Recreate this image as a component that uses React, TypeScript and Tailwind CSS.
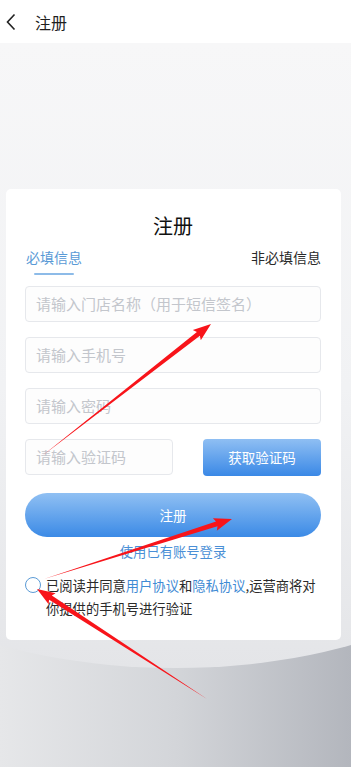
import React from "react";

type Pt = [number, number];

function arrowPoints(tail: Pt, tip: Pt, head = 16, headW = 13, bodyW = 5): string {
  const [x1, y1] = tail;
  const [x2, y2] = tip;
  const dx = x2 - x1;
  const dy = y2 - y1;
  const len = Math.hypot(dx, dy);
  const ux = dx / len;
  const uy = dy / len;
  const nx = -uy;
  const ny = ux;
  const bx = x2 - ux * head;
  const by = y2 - uy * head;
  const pts: Pt[] = [
    [x1, y1],
    [bx + (nx * bodyW) / 2, by + (ny * bodyW) / 2],
    [bx - ux * 2 + (nx * headW) / 2, by - uy * 2 + (ny * headW) / 2],
    [x2, y2],
    [bx - ux * 2 - (nx * headW) / 2, by - uy * 2 - (ny * headW) / 2],
    [bx - (nx * bodyW) / 2, by - (ny * bodyW) / 2],
  ];
  return pts.map((p) => `${p[0].toFixed(1)},${p[1].toFixed(1)}`).join(" ");
}

function Field({ placeholder, className = "" }: { placeholder: string; className?: string }) {
  return (
    <div
      className={`h-9 rounded-[4px] border border-[#e6e8ec] bg-[#fdfdfd] flex items-center pl-[10px] text-[15px] text-[#c3c6cc] ${className}`}
    >
      {placeholder}
    </div>
  );
}

export default function App() {
  return (
    <div
      className="relative w-[351px] h-[767px] overflow-hidden flex flex-col bg-[linear-gradient(90deg,#e6e7e9_0%,#d3d5d9_50%,#b3b6bd_100%)]"
      style={{ fontFamily: '"Noto Sans CJK SC", "Noto Sans", sans-serif' }}
    >
      {/* header */}
      <div className="h-[43px] shrink-0 bg-white flex items-center">
        <svg width="14" height="20" viewBox="0 0 14 20" className="ml-[4px]">
          <polyline points="10.5,2.5 3.5,10 10.5,17.5" fill="none" stroke="#222" strokeWidth="1.6" />
        </svg>
        <span className="ml-[17px] text-[16px] text-[#1f1f1f] leading-none">注册</span>
      </div>

      {/* hero with curved bottom */}
      <div className="shrink-0 h-[625px] mx-[-175px] px-[175px] rounded-b-[350px_172px] bg-[linear-gradient(180deg,#f7f7f8_0%,#f1f2f4_55%,#e4e5e8_100%)] pt-[146px]">
        <div className="ml-[6px] mr-[10px] h-[451px] rounded-[5px] bg-white pl-[19px] pr-[20px] pt-[23px] flex flex-col">
          <div className="text-center text-[20px] leading-[28px] text-[#111]">注册</div>

          <div className="mt-[7px] flex justify-between items-start">
            <div className="flex flex-col items-center">
              <span className="text-[14px] leading-[20px] text-[#5a9ad6] pl-[1px]">必填信息</span>
              <span className="mt-[6px] w-[40px] h-[2px] rounded-full bg-[#8dbbe8]" />
            </div>
            <span className="text-[14px] leading-[20px] text-[#2a2a2a]">非必填信息</span>
          </div>

          <div className="mt-[11px] flex flex-col gap-[15px]">
            <Field placeholder="请输入门店名称（用于短信签名）" />
            <Field placeholder="请输入手机号" />
            <Field placeholder="请输入密码" />
            <div className="flex gap-[30px]">
              <Field placeholder="请输入验证码" className="w-[148px]" />
              <div className="flex-1 h-[37px] rounded-[4px] bg-[linear-gradient(180deg,#8fbff3_0%,#3a88e6_100%)] flex items-center justify-center text-white text-[13.5px]">
                获取验证码
              </div>
            </div>
          </div>

          <div className="mt-[17px] h-[44px] rounded-full bg-[linear-gradient(180deg,#90c0f3_0%,#3b8ae6_100%)] flex items-center justify-center text-white text-[13.5px]">
            注册
          </div>

          <div className="mt-[6px] text-center text-[13.3px] leading-[18px] text-[#4a8fd6]">使用已有账号登录</div>

          <div className="mt-[13px] flex items-start">
            <span className="mt-[3px] shrink-0 w-[16px] h-[16px] rounded-full border-[1.5px] border-[#5b9bd6]" />
            <p className="ml-[5px] text-[13.3px] leading-[23px] text-[#2a2a2a]">
              已阅读并同意<span className="text-[#3f8bd4]">用户协议</span>和<span className="text-[#3f8bd4]">隐私协议</span>,运营商将对你提供的手机号进行验证
            </p>
          </div>
        </div>
      </div>

      {/* annotation arrows */}
      <svg className="absolute inset-0 pointer-events-none" width="351" height="767" viewBox="0 0 351 767">
        <polygon points={arrowPoints([42, 456], [211, 324])} fill="#f8141a" />
        <polygon points={arrowPoints([44, 579], [232, 519])} fill="#f8141a" />
        <polygon points={arrowPoints([207, 699], [37, 589])} fill="#f8141a" />
      </svg>
    </div>
  );
}
